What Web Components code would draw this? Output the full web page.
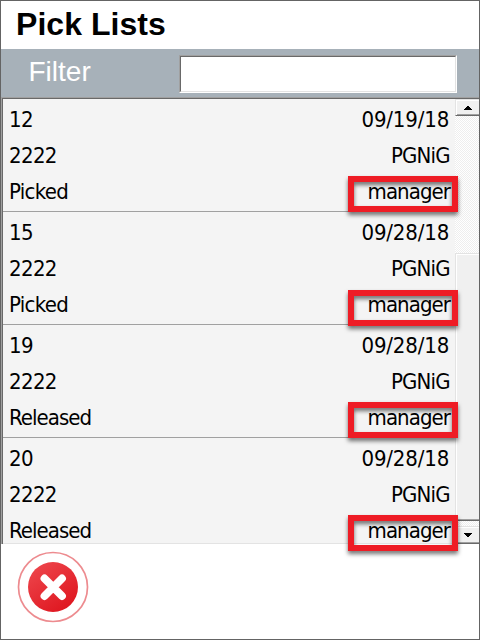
<!DOCTYPE html>
<html lang="en">
<head>
<meta charset="utf-8">
<title>Pick Lists</title>
<style>
html,body{margin:0;height:100%;overflow:hidden;background:#fff}
</style>
</head>
<body>
<pick-app></pick-app>
<script>
const define = (name, html) => customElements.define(name, class extends HTMLElement {
  constructor() {
    super();
    this.attachShadow({mode: 'open'}).innerHTML = html;
  }
});

define('screen-title', `<style>
:host{display:flex;box-sizing:border-box;height:48px;flex:none;padding:3px 0 0 15px;background:#fff;color:#000;font:bold 32px/40px "Liberation Sans",Arial,sans-serif;letter-spacing:.05px}
</style><slot></slot>`);

define('filter-bar', `<style>
:host{display:flex;box-sizing:border-box;height:48px;flex:none;background:#a7b1b9;padding:6px 22px 4px 27.5px;justify-content:space-between;color:#fff;font:28px/34px "Liberation Sans",Arial,sans-serif}
.field{box-sizing:border-box;width:278px;height:38px;border:1px solid;border-color:#a0a0a0 #fff #fff #a0a0a0}
.inner{box-sizing:border-box;height:36px;background:#fff;border:1px solid;border-color:#696969 #e3e3e3 #e3e3e3 #696969}
</style><span><slot></slot></span><div class="field"><div class="inner"></div></div>`);

define('red-frame', `<style>
:host{display:block;box-sizing:border-box;width:110px;height:36px;border:6px solid #ee1c25;filter:drop-shadow(0 3px 2px rgba(0,0,0,.55))}
</style>`);

define('scroll-bar', `<style>
:host{display:flex;flex-direction:column;width:24px;flex:none;background:repeating-conic-gradient(#fff 0 25%,#eee 0 50%) 0 0/2px 2px}
.b{box-sizing:border-box;display:flex;align-items:center;justify-content:center;background:#f0f0f0;border:1px solid;border-color:#e3e3e3 #696969 #696969 #e3e3e3;box-shadow:inset 1px 1px #fff,inset -1px -1px #a0a0a0}
.b{border-right:0;box-shadow:inset 1px 1px #fff,inset 0 -1px #a0a0a0}
.up{height:17px}.down{height:18px}.thumb{height:268px;margin:137px 0 5px}
svg{display:block;width:8px;height:4px}
</style>
<div class="b up"><svg viewBox="0 0 8 4" shape-rendering="crispEdges"><path d="M3 0h2v1h1v1h1v1h1v1H0V3h1V2h1V1h1z"/></svg></div>
<div class="b thumb"></div>
<div class="b down"><svg viewBox="0 0 8 4" shape-rendering="crispEdges"><path d="M0 0h8v1H7v1H6v1H5v1H3V3H2V2H1V1H0z"/></svg></div>`);

customElements.define('pick-row', class extends HTMLElement {
  connectedCallback() {
    const a = n => this.getAttribute(n);
    this.attachShadow({mode: 'open'}).innerHTML = `<style>
:host{display:flex;box-sizing:border-box;height:113px;flex:none;justify-content:space-between;position:relative;padding:3px 6px 0 6px;border-bottom:1px solid #a0a0a0;color:#000;font:22px/36px "DejaVu Sans Condensed","DejaVu Sans",sans-serif;font-stretch:condensed}
:host(:last-of-type){border-bottom:0}
div{display:flex;flex-direction:column}
.r{align-items:flex-end}
span{white-space:nowrap;letter-spacing:var(--ls)}
.r span{margin-right:var(--ls)}
.num{--ls:-.65px}.date{--ls:-.15px}.org{--ls:-.8px}.user{--ls:-.95px}.Picked{--ls:-.7px}.Released{--ls:-.95px}
red-frame{position:absolute;right:-3px;top:var(--frame-top,77px)}
</style><div><span class="num">${a('no')}</span><span class="num">2222</span><span class="${a('state')}">${a('state')}</span></div>
<div class="r"><span class="date">${a('date')}</span><span class="org">PGNiG</span><span class="user">manager</span></div><red-frame></red-frame>`;
  }
});

define('pick-list', `<style>
:host{display:flex;box-sizing:border-box;height:447px;flex:none;background:#f4f4f4;border-left:1px solid #a0a0a0;border-top:1px solid #a0a0a0;position:relative}
.in{display:flex;flex:1;min-width:0;border-left:1px solid #696969;border-top:1px solid #696969;box-shadow:inset 0 -1px #e3e3e3}
.rows{flex:1;min-width:0;display:flex;flex-direction:column}
.rows,::slotted(*){z-index:1}
</style><div class="in"><div class="rows"><slot></slot></div><scroll-bar></scroll-bar></div>`);

define('cancel-button', `<style>
:host{display:block;width:72px;height:72px;margin:7px 0 0 16px}
svg{display:block}
</style><svg width="72" height="72" viewBox="0 0 72 72"><defs><linearGradient id="g" x1="0" y1="0" x2=".7" y2="1"><stop stop-color="#ef4a50"/><stop offset="1" stop-color="#df1720"/></linearGradient></defs>
<circle cx="36" cy="36" r="34.5" fill="#fff" stroke="#ed8b8f" stroke-width="1.7"/><circle cx="36" cy="36" r="25" fill="url(#g)"/><path d="M27.5 27.5l17.5 17.5M45 27.5L27.5 45" stroke="#fff" stroke-width="7.8" stroke-linecap="round"/></svg>`);

define('pick-app', `<style>
:host{display:flex;flex-direction:column;box-sizing:border-box;width:480px;height:640px;border:1px solid #646464;background:#fff;overflow:hidden}
</style>
<screen-title>Pick Lists</screen-title>
<filter-bar>Filter</filter-bar>
<pick-list>
<pick-row no="12" state="Picked" date="09/19/18"></pick-row>
<pick-row no="15" state="Picked" date="09/28/18" style="--frame-top:78px"></pick-row>
<pick-row no="19" state="Released" date="09/28/18"></pick-row>
<pick-row no="20" state="Released" date="09/28/18"></pick-row>
</pick-list>
<cancel-button></cancel-button>`);
</script>
</body>
</html>
